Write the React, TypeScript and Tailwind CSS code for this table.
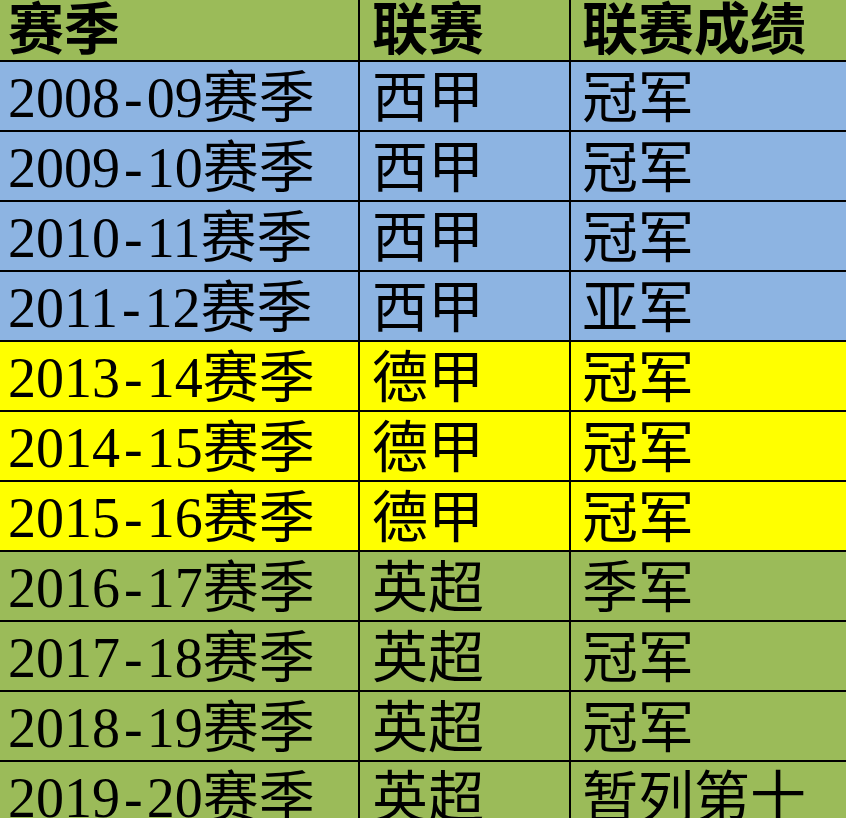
const rows: { season: string; league: string; result: string; bg: string }[] = [
  { season: '2008-09', league: '西甲', result: '冠军', bg: 'bg-[#8db4e2]' },
  { season: '2009-10', league: '西甲', result: '冠军', bg: 'bg-[#8db4e2]' },
  { season: '2010-11', league: '西甲', result: '冠军', bg: 'bg-[#8db4e2]' },
  { season: '2011-12', league: '西甲', result: '亚军', bg: 'bg-[#8db4e2]' },
  { season: '2013-14', league: '德甲', result: '冠军', bg: 'bg-[#ffff00]' },
  { season: '2014-15', league: '德甲', result: '冠军', bg: 'bg-[#ffff00]' },
  { season: '2015-16', league: '德甲', result: '冠军', bg: 'bg-[#ffff00]' },
  { season: '2016-17', league: '英超', result: '季军', bg: 'bg-[#9bbb59]' },
  { season: '2017-18', league: '英超', result: '冠军', bg: 'bg-[#9bbb59]' },
  { season: '2018-19', league: '英超', result: '冠军', bg: 'bg-[#9bbb59]' },
  { season: '2019-20', league: '英超', result: '暂列第十', bg: 'bg-[#9bbb59]' },
];

export default function App() {
  return (
    <div
      className="h-[818px] w-[846px] overflow-hidden text-black text-[56px] leading-none"
      style={{ fontFamily: '"Liberation Serif", "Noto Sans CJK SC", serif' }}
    >
      {/* Header */}
      <div className="flex h-[62px] border-b-2 border-black bg-[#9bbb59] font-bold">
        <div className="flex w-[360px] items-center border-r-2 border-black pl-[8px]">赛季</div>
        <div className="flex w-[211px] items-center border-r-2 border-black pl-[12px]">联赛</div>
        <div className="flex flex-1 items-center pl-[11px]">联赛成绩</div>
      </div>

      {rows.map(r => {
        const [a, b] = r.season.split('-');
        return (
          <div key={r.season} className={`flex h-[70px] shrink-0 border-b-2 border-black ${r.bg}`}>
            <div className="flex w-[360px] items-center whitespace-nowrap border-r-2 border-black pl-[8px] pt-[4px]">
              {a}
              <span className="px-[4px]">-</span>
              {b}
              赛季
            </div>
            <div className="flex w-[211px] items-center border-r-2 border-black pl-[12px] pt-[4px]">
              {r.league}
            </div>
            <div className="flex flex-1 items-center pl-[11px] pt-[4px]">{r.result}</div>
          </div>
        );
      })}
    </div>
  );
}
